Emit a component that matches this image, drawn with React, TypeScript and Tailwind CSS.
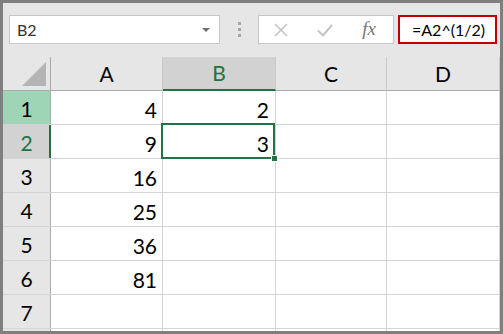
import type { ReactNode } from 'react';

const colWidths = ['w-[112px]', 'w-[113px]', 'w-[111px]', 'w-[113px]'];
const letters = ['A', 'B', 'C', 'D'];

// row 8 is only a sliver at the bottom, so no label
const rows: { n: number; label?: string; a?: string; b?: string }[] = [
  { n: 1, label: '1', a: '4', b: '2' },
  { n: 2, label: '2', a: '9', b: '3' },
  { n: 3, label: '3', a: '16' },
  { n: 4, label: '4', a: '25' },
  { n: 5, label: '5', a: '36' },
  { n: 6, label: '6', a: '81' },
  { n: 7, label: '7' },
  { n: 8 },
];

function Cell({ w, children, pr = 'pr-[5px]' }: { w: string; children?: ReactNode; pr?: string }) {
  return (
    <div className={`${w} h-full shrink-0 border-r border-[#d4d4d4] flex items-center justify-end pt-[4px] ${pr}`}>
      {children}
    </div>
  );
}

export default function App() {
  return (
    <div
      className="w-[503px] h-[334px] border-[3px] border-[#7f7f7f] bg-[#e6e6e6] overflow-hidden flex flex-col"
      style={{ fontFamily: 'Lato, "Open Sans", sans-serif' }}
    >
      {/* Toolbar */}
      <div className="h-[54px] shrink-0 flex items-start pt-[12px] pl-[6px]">
        <div className="w-[211px] h-[29px] bg-white border border-[#c6c6c6] flex items-center pl-[7px] pr-[9px] text-[16px] text-[#333]">
          <span className="flex-1">B2</span>
          <span className="w-0 h-0 border-l-[4px] border-r-[4px] border-t-[4px] border-l-transparent border-r-transparent border-t-[#6f6f6f]" />
        </div>
        <div className="w-[38px] h-[29px] flex flex-col items-center justify-center gap-[3px]">
          <span className="w-[3px] h-[3px] bg-[#a6a6a6]" />
          <span className="w-[3px] h-[3px] bg-[#a6a6a6]" />
          <span className="w-[3px] h-[3px] bg-[#a6a6a6]" />
        </div>
        <div className="w-[136px] h-[29px] bg-white border border-[#c6c6c6] flex items-center">
          <div className="w-[44px] flex justify-center">
            <svg width="16" height="16" viewBox="0 0 16 16">
              <path d="M2 2L14 14M14 2L2 14" stroke="#c4c4c4" strokeWidth="1.6" fill="none" />
            </svg>
          </div>
          <div className="w-[44px] flex justify-center">
            <svg width="18" height="16" viewBox="0 0 18 16">
              <path d="M2 8.5L7 13.5L16 3" stroke="#c4c4c4" strokeWidth="2" fill="none" />
            </svg>
          </div>
          <div
            className="w-[44px] flex justify-center text-[19px] italic text-[#777]"
            style={{ fontFamily: '"Liberation Serif", serif' }}
          >
            fx
          </div>
        </div>
        <div className="ml-[4px] w-[99px] h-[29px] bg-white border-2 border-[#c00000] flex items-center pl-[12px] text-[16px] text-black">
          =A2^(1/2)
        </div>
      </div>

      {/* Grid */}
      <div className="relative flex-1 bg-white overflow-hidden">
        {/* Column headers */}
        <div className="flex h-[34px] bg-[#e6e6e6] text-[21px] text-black">
          <div className="w-[48px] shrink-0 border-r border-b border-[#ababab] relative">
            <svg className="absolute left-[19px] top-[5px]" width="24" height="24" viewBox="0 0 24 24">
              <path d="M24 0L24 24L0 24Z" fill="#b4b4b4" />
            </svg>
          </div>
          {letters.map((l, i) =>
            l === 'B' ? (
              <div
                key={l}
                className={`${colWidths[i]} shrink-0 border-r border-[#c8c8c8] border-b-2 border-b-[#217346] bg-[#d2d2d2] text-[#217346] flex items-center justify-center`}
              >
                {l}
              </div>
            ) : (
              <div
                key={l}
                className={`${colWidths[i]} shrink-0 border-r border-[#c8c8c8] border-b border-b-[#ababab] flex items-center justify-center`}
              >
                {l}
              </div>
            )
          )}
        </div>

        {/* Rows */}
        {rows.map(r => (
          <div key={r.n} className="flex h-[34px] border-b border-[#d4d4d4] text-[21px] text-black">
            {r.n === 1 ? (
              <div className="w-[48px] shrink-0 h-full bg-[#9fd5b7] border-r border-[#ababab] flex items-center justify-center pt-[3px]">
                {r.label}
              </div>
            ) : r.n === 2 ? (
              <div className="w-[48px] shrink-0 h-full bg-[#d2d2d2] border-r-2 border-[#217346] text-[#217346] flex items-center justify-center pt-[3px] pl-[1px]">
                {r.label}
              </div>
            ) : (
              <div className="w-[48px] shrink-0 h-full bg-[#e6e6e6] border-r border-[#ababab] flex items-center justify-center pt-[3px]">
                {r.label}
              </div>
            )}
            <Cell w={colWidths[0]}>{r.a}</Cell>
            <Cell w={colWidths[1]} pr="pr-[6px]">{r.b}</Cell>
            <Cell w={colWidths[2]} />
            <Cell w={colWidths[3]} />
          </div>
        ))}

        {/* Active cell selection */}
        <div className="absolute left-[158px] top-[66px] w-[114px] h-[36px] border-2 border-[#217346] pointer-events-none">
          <div className="absolute right-[-5px] bottom-[-5px] w-[7px] h-[7px] bg-[#217346] border border-white" />
        </div>
      </div>
    </div>
  );
}
